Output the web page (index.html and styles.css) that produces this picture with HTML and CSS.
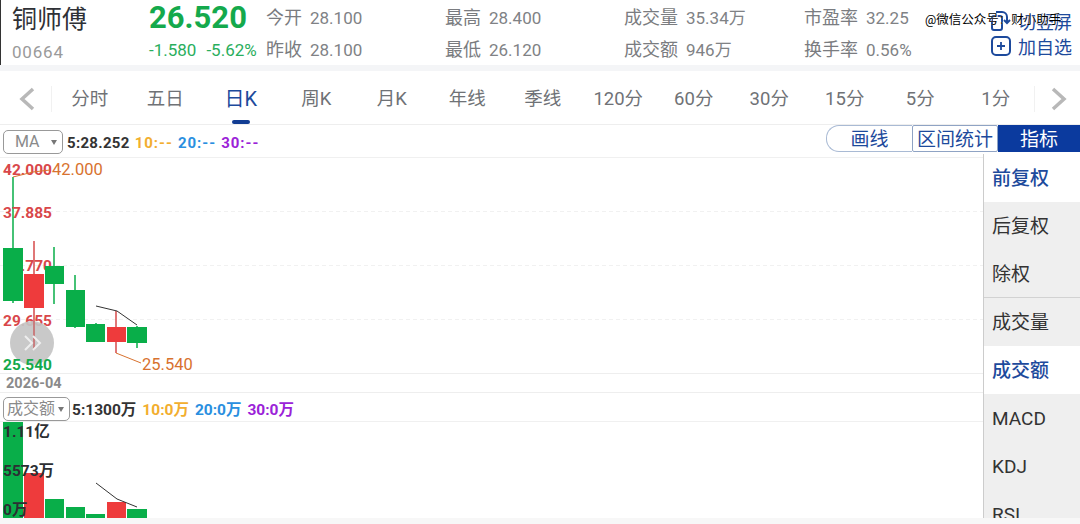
FILE: index.html
```html
<!DOCTYPE html>
<html lang="zh">
<head>
<meta charset="utf-8">
<title>铜师傅</title>
<link rel="stylesheet" href="styles.css">
</head>
<body>
<div class="app">
  <header class="quote">
    <div class="name-col">
      <div class="name">铜师傅</div>
      <div class="code">00664</div>
    </div>
    <div class="price-col">
      <div class="price">26.520</div>
      <div class="change"><span>-1.580</span><span>-5.62%</span></div>
    </div>
    <div class="stat-col c1"><div class="stat"><b>今开</b><i>28.100</i></div><div class="stat"><b>昨收</b><i>28.100</i></div></div>
    <div class="stat-col c2"><div class="stat"><b>最高</b><i>28.400</i></div><div class="stat"><b>最低</b><i>26.120</i></div></div>
    <div class="stat-col c3"><div class="stat"><b>成交量</b><i>35.34万</i></div><div class="stat"><b>成交额</b><i>946万</i></div></div>
    <div class="stat-col c4"><div class="stat"><b>市盈率</b><i>32.25</i></div><div class="stat"><b>换手率</b><i>0.56%</i></div></div>
    <div class="actions">
      <div class="action">
        <svg class="action-icon" viewBox="0 0 20 20"><rect x="1" y="5" width="10" height="14" rx="2" fill="none" stroke="#1d4a9c" stroke-width="2"/><path d="M5 1h6a5 5 0 0 1 5 5v5m-3-2 3 3 3-3" fill="none" stroke="#1d4a9c" stroke-width="2"/></svg>
        <span>切竖屏</span>
      </div>
      <div class="action">
        <svg class="action-icon" viewBox="0 0 20 20"><rect x="1" y="1" width="18" height="18" rx="4" fill="none" stroke="#1d4a9c" stroke-width="2"/><path d="M6 10h8M10 6v8" stroke="#1d4a9c" stroke-width="1.800"/></svg>
        <span>加自选</span>
      </div>
    </div>
    <div class="watermark">@微信公众号：财小助手</div>
  </header>

  <nav class="tabs">
    <svg class="arrow" viewBox="0 0 18 24"><path d="M15 2 4 12l11 10" fill="none" stroke="#b8b8b8" stroke-width="3.500"/></svg>
    <span class="sep first"></span>
    <div class="tab-list">
      <span class="tab">分时</span><span class="tab">五日</span>
      <span class="tab on">日K</span>
      <span class="tab">周K</span><span class="tab">月K</span><span class="tab">年线</span><span class="tab">季线</span>
      <span class="tab">120分</span><span class="tab">60分</span><span class="tab">30分</span><span class="tab">15分</span><span class="tab">5分</span><span class="tab">1分</span>
    </div>
    <span class="sep"></span>
    <svg class="arrow next" viewBox="0 0 18 24"><path d="M3 2l11 10L3 22" fill="none" stroke="#b8b8b8" stroke-width="3.500"/></svg>
  </nav>

  <div class="toolbar">
    <div class="select ma"><span>MA</span><em></em></div>
    <div class="legend"><span class="k">5:28.252</span><span class="y">10:--</span><span class="bl">20:--</span><span class="p">30:--</span></div>
    <div class="btns">
      <span class="btn draw">画线</span><span class="btn range">区间统计</span><span class="btn ind">指标</span>
    </div>
  </div>

  <main class="body">
    <section class="charts">
      <div class="kline">
        <svg class="plot" viewBox="0 0 983 215" width="983" height="215">
          <g class="grid"><path d="M0 53.500H983M0 107.500H983M0 161.500H983"/></g>
          <text class="axis up" x="3" y="113">33.770</text>
          <g class="green">
            <path class="wick" d="M13 19V145"/><rect x="3" y="90" width="20" height="53"/>
            <path class="wick" d="M54 89V146"/><rect x="45" y="108" width="19" height="18"/>
            <path class="wick" d="M75 117V170"/><rect x="66" y="132" width="19" height="37"/>
            <path class="wick" d="M96 165V174"/><rect x="86" y="166" width="19" height="18"/>
            <path class="wick" d="M137 168V190"/><rect x="127" y="169" width="20" height="16"/>
          </g>
          <g class="red">
            <path class="wick" d="M34 83V192"/><rect x="24" y="116" width="20" height="34"/>
            <path class="wick" d="M116 153V195"/><rect x="107" y="169" width="19" height="15"/>
          </g>
          <path class="ma5" d="M96 148 117 153 137 167"/>
          <text class="axis up" x="3" y="17">42.000</text>
          <text class="axis up" x="3" y="60">37.885</text>
          <text class="axis up" x="3" y="168">29.655</text>
          <circle class="fab-bg" cx="32" cy="185" r="22"/>
          <path class="wick-over" d="M34 163V192"/>
          <path class="fab" d="M25 178l7 7-7 7M33 178l7 7-7 7"/>
          <text class="axis dn" x="3" y="212">25.540</text>
          <path class="lead" d="M13 19 33 14 50 12"/>
          <path class="lead" d="M116 195 141 205"/>
          <text class="mark" x="52" y="17">42.000</text>
          <text class="mark" x="142" y="212">25.540</text>
        </svg>
        <div class="date">2026-04</div>
      </div>
      <div class="vol">
        <div class="vol-bar">
          <div class="select amt"><span>成交额</span><em></em></div>
          <div class="legend small"><span class="k">5:1300万</span><span class="y">10:0万</span><span class="bl">20:0万</span><span class="p">30:0万</span></div>
        </div>
        <svg class="plot" viewBox="0 0 983 96" width="983" height="96">
          <g class="green">
            <rect x="3" y="0" width="20" height="96"/><rect x="45" y="77" width="19" height="19"/>
            <rect x="66" y="85" width="19" height="11"/><rect x="86" y="92" width="19" height="4"/>
            <rect x="127" y="87" width="20" height="9"/>
          </g>
          <g class="red"><rect x="24" y="51" width="20" height="45"/><rect x="107" y="80" width="19" height="16"/></g>
          <path class="ma5" d="M96 61 117 77 137 85"/>
          <text class="vtext" x="3" y="15">1.11亿</text>
          <text class="vtext" x="3" y="54">5573万</text>
          <text class="vtext" x="3" y="93">0万</text>
        </svg>
      </div>
    </section>
    <aside class="side">
      <div class="side-group">
        <div class="item on">前复权</div><div class="item">后复权</div><div class="item">除权</div>
      </div>
      <div class="side-group">
        <div class="item">成交量</div><div class="item on">成交额</div><div class="item">MACD</div><div class="item">KDJ</div><div class="item">RSI</div>
      </div>
    </aside>
  </main>
  <div class="foot"></div>
</div>
</body>
</html>
```
FILE: styles.css
```css
* { box-sizing: border-box; }
html, body { margin: 0; padding: 0; background: #fff; }
body { font-family: "Roboto", "Noto Sans CJK SC", sans-serif; }
.app { width: 1080px; height: 524px; overflow: hidden; display: flex; flex-direction: column; background: #fff; }

.quote { position: relative; height: 65px; flex: none; display: flex; background: #fff; box-shadow: inset 1px 0 0 #333; }
.name-col { width: 149px; padding: 3px 0 0 12px; }
.name { font-size: 25px; line-height: 34px; color: #2f3136; }
.code { font-size: 17px; line-height: 24px; margin-top: 3px; color: #9a9a9a; letter-spacing: .8px; }
.price-col { width: 117px; }
.price { font-size: 31px; font-weight: 700; line-height: 36px; color: #14a94c; }
.change { font-size: 17px; line-height: 20px; margin-top: 4px; color: #2aae5d; display: flex; gap: 10px; white-space: nowrap; }
.stat-col { display: flex; flex-direction: column; padding-top: 6px; gap: 8px; white-space: nowrap; }
.stat { display: flex; gap: 8px; line-height: 24px; height: 24px; font-size: 17px; color: #808285; align-items: center; }
.stat b { font-weight: 400; font-size: 18px; color: #7a7c80; }
.stat i { font-style: normal; }
.c1 { width: 179px; }
.c2 { width: 179px; }
.c3 { width: 180px; }
.c4 { width: 187px; }
.actions { display: flex; flex-direction: column; gap: 1px; padding-top: 9px; }
.action { display: flex; align-items: center; gap: 7px; height: 24px; font-size: 18px; color: #1d4a9c; white-space: nowrap; }
.action-icon { width: 20px; height: 20px; flex: none; }
.watermark { position: absolute; left: 925px; top: 11px; font-size: 12.500px; line-height: 18px; color: #000; text-shadow: 0 0 1px #fff, 1px 0 0 #fff; white-space: nowrap; }

.tabs { height: 60px; flex: none; display: flex; align-items: center; padding: 3px 0 0 18px; background: #fff; border-top: 6px solid #f4f5f7; border-bottom: 1px solid #eee; }
.arrow { width: 18px; height: 24px; flex: none; }
.next { margin-left: 15px; }
.sep { width: 1px; height: 26px; flex: none; background: #f1f1f1; }
.first { margin-left: 15px; }
.tab-list { width: 982px; flex: none; display: flex; font-size: 18.500px; color: #6f7276; }
.tab { position: relative; width: 75.500px; flex: none; text-align: center; line-height: 24px; white-space: nowrap; }
.tab.on { color: #1d4a9c; font-size: 20px; }
.tab.on::after { content: ""; position: absolute; left: 29px; top: 33px; width: 18px; height: 4px; border-radius: 2px; background: #123d93; }

.toolbar { height: 33px; flex: none; display: flex; align-items: flex-start; padding: 5px 0 0 3px; background: #fff; border-bottom: 1px solid #f0f0f0; }
.select { position: relative; height: 24px; border: 1px solid #999; border-radius: 5px; color: #8a8a8a; font-size: 16px; line-height: 22px; background: #fff; }
.select em { position: absolute; right: 5px; top: 9px; border: 3.500px solid transparent; border-top: 5px solid #777; border-bottom: 0; }
.ma { width: 60px; padding-left: 11px; }
.amt { width: 67px; padding-left: 3px; }
.legend { display: flex; gap: 5px; font-size: 15px; font-weight: 700; line-height: 22px; margin: 2px 0 0 4px; white-space: nowrap; letter-spacing: .3px; }
.legend .k { color: #333; }
.legend .y { color: #f2ae2e; letter-spacing: 1px; }
.legend .bl { color: #2a8fe0; letter-spacing: 1px; }
.legend .p { color: #9b22d8; letter-spacing: 1px; }
.btns { margin-left: auto; display: flex; height: 27px; font-size: 19px; color: #1d4a9c; margin-top: -5px; }
.btn { display: flex; align-items: center; justify-content: center; padding-bottom: 2px; }
.draw { width: 86px; border: 1px solid #a9bad4; border-right: 0; border-radius: 13px 0 0 13px; }
.range { width: 86px; border: 1px solid #8fa3c4; border-radius: 2px; white-space: nowrap; }
.ind { width: 82px; background: #0b3a9e; color: #fff; }

.body { height: 360px; flex: none; display: flex; position: relative; }
.charts { width: 983px; flex: none; display: flex; flex-direction: column; }
.kline { height: 235px; flex: none; }
.plot { display: block; }
.grid path { stroke: #f1f1f1; stroke-dasharray: 4 3; fill: none; }
.green rect { fill: #09ae49; }
.green .wick { stroke: #09ae49; stroke-width: 1.500; fill: none; }
.red rect { fill: #ee3b3c; }
.red .wick { stroke: #d64a4a; stroke-width: 1.500; fill: none; }
.wick-over { stroke: #c9686a; stroke-width: 1.500; fill: none; }
.ma5 { stroke: #333; stroke-width: 1; fill: none; }
.lead { stroke: #d8722f; stroke-width: 1; fill: none; }
.fab-bg { fill: #c4c4c4; fill-opacity: .92; }
.fab { stroke: #eee; stroke-width: 2; fill: none; }
.axis { font: 700 15.500px "Roboto", sans-serif; }
.up { fill: #d9474a; }
.dn { fill: #13a94b; }
.mark { font: 400 16.500px "Roboto", sans-serif; fill: #d8722f; }
.vtext { font: 700 15.500px "Roboto", "Noto Sans CJK SC", sans-serif; fill: #2c2f33; }
.date { height: 20px; padding-left: 6px; font-size: 14.500px; font-weight: 700; line-height: 19px; color: #8a8a8a; border-top: 1px solid #eee; border-bottom: 1px solid #eee; }
.vol { flex: 1; min-height: 0; }
.vol-bar { height: 29px; display: flex; align-items: flex-start; padding: 4px 0 0 3px; border-bottom: 1px solid #f0f0f0; }
.legend.small { font-size: 15.500px; gap: 6px; margin-left: 2px; letter-spacing: 0; }
.small .y, .small .bl, .small .p { letter-spacing: 0; }

.side { width: 97px; flex: none; background: #efefef; border-left: 1px solid #ccc; margin-top: -4px; height: 364px; overflow: hidden; position: relative; }
.side-group + .side-group { border-top: 1px solid #d2d2d2; margin-top: -1px; position: relative; }
.item { height: 48px; line-height: 50px; padding-left: 8px; font-size: 19px; color: #333; }
.item.on { background: #fff; color: #1d4a9c; font-weight: 500; }
.foot { height: 6px; flex: none; background: #f7f7f7; }
```
